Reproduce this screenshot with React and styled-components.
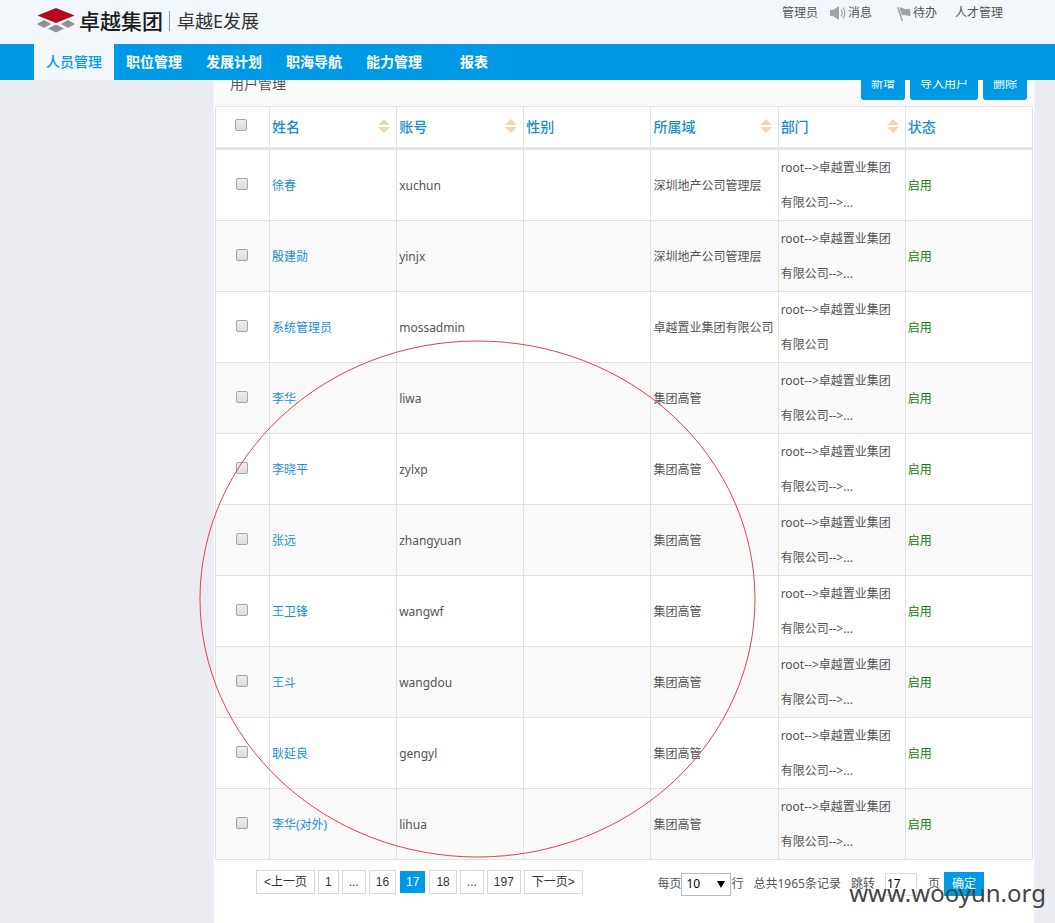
import React from 'react';
import styled, { createGlobalStyle } from 'styled-components';

const Global = createGlobalStyle`
  * { box-sizing: border-box; }
  body {
    margin: 0;
    background: #ebecf1;
    color: #555;
    font: 12px/16px "Noto Sans", "Noto Sans CJK SC", sans-serif;
  }
  button, input, select { font: inherit; margin: 0; }
  a { color: inherit; text-decoration: none; }
`;

const Page = styled.div`
  position: relative;
  min-height: 100vh;
  display: flex;
  flex-direction: column;
`;

const Header = styled.header`
  position: sticky;
  top: 0;
  z-index: 2;
`;

const TopBar = styled.div`
  display: flex;
  justify-content: space-between;
  align-items: flex-start;
  height: 44px;
  padding: 5px 52px 0 37px;
  background: #f2f7fb;
`;

const Brand = styled.a`
  display: flex;
  align-items: center;
  height: 32px;
  color: #1c1c1c;
`;

const BrandName = styled.span`
  margin-left: 4px;
  font-size: 21px;
  line-height: 32px;
  font-weight: 500;
`;

const BrandProduct = styled.span`
  margin-left: 6px;
  padding-left: 7px;
  font-size: 18px;
  line-height: 20px;
  color: #333;
  border-left: 1px solid #8aa0a8;
`;

const TopLinks = styled.nav`
  display: flex;
  align-items: center;
`;

const TopLink = styled.a`
  display: flex;
  align-items: center;
  gap: 2px;
  margin-left: ${(p) => p.$space}px;
`;

const NavBar = styled.nav`
  display: flex;
  height: 36px;
  padding-left: 34px;
  background: #0099e5;
`;

const NavTab = styled.a`
  min-width: 80px;
  text-align: center;
  font-size: 14px;
  line-height: 36px;
  font-weight: ${(p) => (p.$active ? 500 : 700)};
  color: ${(p) => (p.$active ? '#0c96dc' : '#fff')};
  background: ${(p) => (p.$active ? '#f2f7fb' : 'transparent')};
`;

const Body = styled.main`
  flex: 1;
  display: flex;
  margin-top: -18px;
  padding: 0 21px 0 214px;
`;

const Panel = styled.section`
  flex: 1;
  min-width: 0;
  padding: 0 1px;
  background: #fff;
  box-shadow: 0 0 5px #f2f3f7;
`;

const PanelHead = styled.div`
  display: flex;
  align-items: center;
  justify-content: space-between;
  height: 44px;
  padding: 0 6px 0 15px;
  background: #fafafa;
`;

const PanelTitle = styled.h1`
  margin: 0;
  font-size: 14px;
  line-height: 20px;
  font-weight: 400;
`;

const Actions = styled.div`
  display: flex;
  gap: 5px;
`;

const ActionButton = styled.button`
  height: 32px;
  padding: 0 10px;
  border: 0;
  border-radius: 3px;
  color: #fff;
  background: #0099e5;
`;

const Table = styled.table`
  width: 100%;
  table-layout: fixed;
  border-collapse: collapse;
`;

const HeadCell = styled.th`
  width: ${(p) => (p.$check ? '54px' : 'auto')};
  height: 42px;
  padding: 0 6px 0 2px;
  border: 1px solid #e2e2e2;
  border-bottom: 3px solid #e4e4e4;
  font-size: 14px;
  font-weight: 500;
  text-align: left;
  color: #1b8dc4;
`;

const HeadLabel = styled.div`
  display: flex;
  align-items: flex-start;
  justify-content: space-between;
`;

const Row = styled.tr`
  background: ${(p) => (p.$shade ? '#f9f9f9' : '#fff')};
`;

const Cell = styled.td`
  height: 71px;
  padding: 0 ${(p) => (p.$wrap ? 8 : 2)}px 0 2px;
  border: 1px solid #e2e2e2;
  line-height: 35px;
  color: ${(p) => p.$color || '#555'};
  white-space: ${(p) => (p.$wrap ? 'normal' : 'nowrap')};
`;

const CheckWrap = styled.div`
  display: flex;
  justify-content: center;
  padding: ${(p) => (p.$head ? '0 0 4px' : '0 2px 2px 0')};
`;

const Check = styled.input`
  appearance: none;
  width: 12px;
  height: 12px;
  border: 1px solid #a6a6a6;
  border-radius: 2px;
  background: linear-gradient(#ececec, #dcdcdc);
  &:checked { background: #0099e5; }
`;

const Footer = styled.div`
  display: flex;
  justify-content: space-between;
  align-items: flex-start;
  padding: 10px 49px 20px 41px;
`;

const Pager = styled.nav`
  display: flex;
  gap: 3px;
  font-family: "Liberation Sans", "Noto Sans CJK SC", sans-serif;
  color: #333;
`;

const PageLink = styled.a`
  height: 24px;
  padding: 0 ${(p) => (p.$wide ? 7 : 6)}px;
  border: 1px solid ${(p) => (p.$current ? '#fff' : '#d9d9d9')};
  line-height: 22px;
  color: ${(p) => (p.$current ? '#fff' : '#333')};
  background: ${(p) => (p.$current ? '#0099e5' : '#fff')};
`;

const Controls = styled.form`
  display: flex;
  align-items: center;
  padding-top: 2px;
`;

const SizeSelect = styled.select`
  appearance: none;
  width: 50px;
  height: 23px;
  padding: 0 4px;
  border: 1px solid #b4bcc8;
  border-radius: 0;
  color: #000;
  background: transparent;
`;

const SelectBox = styled.span`
  display: grid;
  align-items: center;
  & > * { grid-area: 1 / 1; }
  & > svg { justify-self: end; margin-right: 6px; pointer-events: none; }
`;

const Total = styled.span`
  margin: 0 10px;
`;

const PageInput = styled.input`
  width: 32px;
  height: 23px;
  margin: 0 11px 0 10px;
  padding: 0 1px 2px;
  border: 1px solid #ddd;
  color: #000;
  background: #fff;
`;

const Confirm = styled.button`
  width: 40px;
  height: 24px;
  margin-left: 4px;
  padding: 0;
  border: 0;
  color: #fff;
  background: #0099e5;
`;

const Highlight = styled.svg`
  position: absolute;
  z-index: 1;
  left: 199px;
  top: 340px;
  pointer-events: none;
`;

const Watermark = styled.div`
  position: absolute;
  z-index: 3;
  right: 9px;
  bottom: 14px;
  font-size: 24px;
  line-height: 32px;
  color: #444;
  pointer-events: none;
`;

const Logo = () => (
  <svg width="38" height="26" viewBox="0 0 38 26" aria-hidden="true">
    <path d="M7 12 14 16 7 20 0 16Z" fill="#8f9396" />
    <path d="M31 12 38 16 31 20 24 16Z" fill="#8f9396" />
    <path d="M19 16.500 27 20.500 19 24.500 11 20.500Z" fill="#8f9396" />
    <path d="M19 -1 38 7.500 19 16.500 0 7.500Z" fill="#f2f7fb" />
    <path d="M19 0 37.500 7.500 19 15 .500 7.500Z" fill="#b8061d" />
  </svg>
);

const Speaker = () => (
  <svg width="16" height="16" viewBox="0 0 16 16" aria-hidden="true">
    <path d="M0 5h3l6-4v14l-6-4H0Z" fill="#a3a3a3" />
    <path d="M11 4.500c1.500 2.300 1.500 4.700 0 7M13 2.500c2.500 3.700 2.500 7.300 0 11" fill="none" stroke="#a3a3a3" strokeWidth="1.200" />
  </svg>
);

const Flag = () => (
  <svg width="14" height="16" viewBox="0 0 14 16" aria-hidden="true">
    <path d="M0 2.500 1.500 2 6 15.500 4.500 16Z" fill="#a3a3a3" />
    <path d="M2.500 3C5 1.500 7 5 9 4l4-.2.500 7C11 12 9 9 5 10.500Z" fill="#a3a3a3" />
  </svg>
);

const Sort = () => (
  <svg width="12" height="14" viewBox="0 0 12 14" aria-hidden="true">
    <path d="M6 0 12 6H0ZM6 14 0 8h12Z" fill="#f1d7ae" />
  </svg>
);

const tabs = ['人员管理', '职位管理', '发展计划', '职海导航', '能力管理', '报表'];

const columns = [
  ['姓名', true],
  ['账号', true],
  ['性别', false],
  ['所属域', true],
  ['部门', true],
  ['状态', false],
];

const longDept = 'root-->卓越置业集团有限公司-->...';
const users = [
  ['徐春', 'xuchun', '深圳地产公司管理层', longDept],
  ['殷建勋', 'yinjx', '深圳地产公司管理层', longDept],
  ['系统管理员', 'mossadmin', '卓越置业集团有限公司', 'root-->卓越置业集团有限公司'],
  ['李华', 'liwa', '集团高管', longDept],
  ['李晓平', 'zylxp', '集团高管', longDept],
  ['张远', 'zhangyuan', '集团高管', longDept],
  ['王卫锋', 'wangwf', '集团高管', longDept],
  ['王斗', 'wangdou', '集团高管', longDept],
  ['耿延良', 'gengyl', '集团高管', longDept],
  ['李华(对外)', 'lihua', '集团高管', longDept],
];

const pages = ['<上一页', '1', '...', '16', '17', '18', '...', '197', '下一页>'];

export default function App() {
  return (
    <Page>
      <Global />
      <Header>
        <TopBar>
          <Brand href="#">
            <Logo />
            <BrandName>卓越集团</BrandName>
            <BrandProduct>卓越E发展</BrandProduct>
          </Brand>
          <TopLinks>
            <TopLink href="#" $space={0}>管理员</TopLink>
            <TopLink href="#" $space={12}><Speaker />消息</TopLink>
            <TopLink href="#" $space={25}><Flag />待办</TopLink>
            <TopLink href="#" $space={18}>人才管理</TopLink>
          </TopLinks>
        </TopBar>
        <NavBar>
          {tabs.map((t, i) => (
            <NavTab key={t} href="#" $active={i === 0}>{t}</NavTab>
          ))}
        </NavBar>
      </Header>

      <Body>
        <Panel>
          <PanelHead>
            <PanelTitle>用户管理</PanelTitle>
            <Actions>
              <ActionButton type="button">新增</ActionButton>
              <ActionButton type="button">导入用户</ActionButton>
              <ActionButton type="button">删除</ActionButton>
            </Actions>
          </PanelHead>

          <Table>
            <thead>
              <tr>
                <HeadCell $check>
                  <CheckWrap $head><Check type="checkbox" aria-label="全选" /></CheckWrap>
                </HeadCell>
                {columns.map(([label, sortable]) => (
                  <HeadCell key={label}>
                    <HeadLabel>{label}{sortable && <Sort />}</HeadLabel>
                  </HeadCell>
                ))}
              </tr>
            </thead>
            <tbody>
              {users.map(([name, account, domain, dept], i) => (
                <Row key={account} $shade={i % 2 === 1}>
                  <Cell>
                    <CheckWrap><Check type="checkbox" aria-label={name} /></CheckWrap>
                  </Cell>
                  <Cell $color="#1b8fd6"><a href="#">{name}</a></Cell>
                  <Cell>{account}</Cell>
                  <Cell />
                  <Cell>{domain}</Cell>
                  <Cell $wrap>{dept}</Cell>
                  <Cell $color="#108010">启用</Cell>
                </Row>
              ))}
            </tbody>
          </Table>

          <Footer>
            <Pager>
              {pages.map((p, i) => (
                <PageLink key={i} href="#" $current={p === '17'} $wide={p.includes('页')}>{p}</PageLink>
              ))}
            </Pager>
            <Controls>
              <label htmlFor="size">每页</label>
              <SelectBox>
                <SizeSelect id="size" defaultValue="10">
                  <option>10</option>
                  <option>20</option>
                  <option>50</option>
                </SizeSelect>
                <svg width="8" height="7" viewBox="0 0 8 7" aria-hidden="true">
                  <path d="M0 0h8L4 7Z" fill="#000" />
                </svg>
              </SelectBox>
              <span>行</span>
              <Total>总共1965条记录</Total>
              <label htmlFor="page">跳转</label>
              <PageInput id="page" type="text" defaultValue="17" />
              <span>页</span>
              <Confirm type="button">确定</Confirm>
            </Controls>
          </Footer>
        </Panel>
      </Body>

      <Highlight width="557" height="518" viewBox="0 0 557 518" aria-hidden="true">
        <ellipse cx="278.500" cy="259" rx="277.500" ry="258" fill="none" stroke="#e0434f" strokeWidth="1" />
      </Highlight>
      <Watermark>www.wooyun.org</Watermark>
    </Page>
  );
}
